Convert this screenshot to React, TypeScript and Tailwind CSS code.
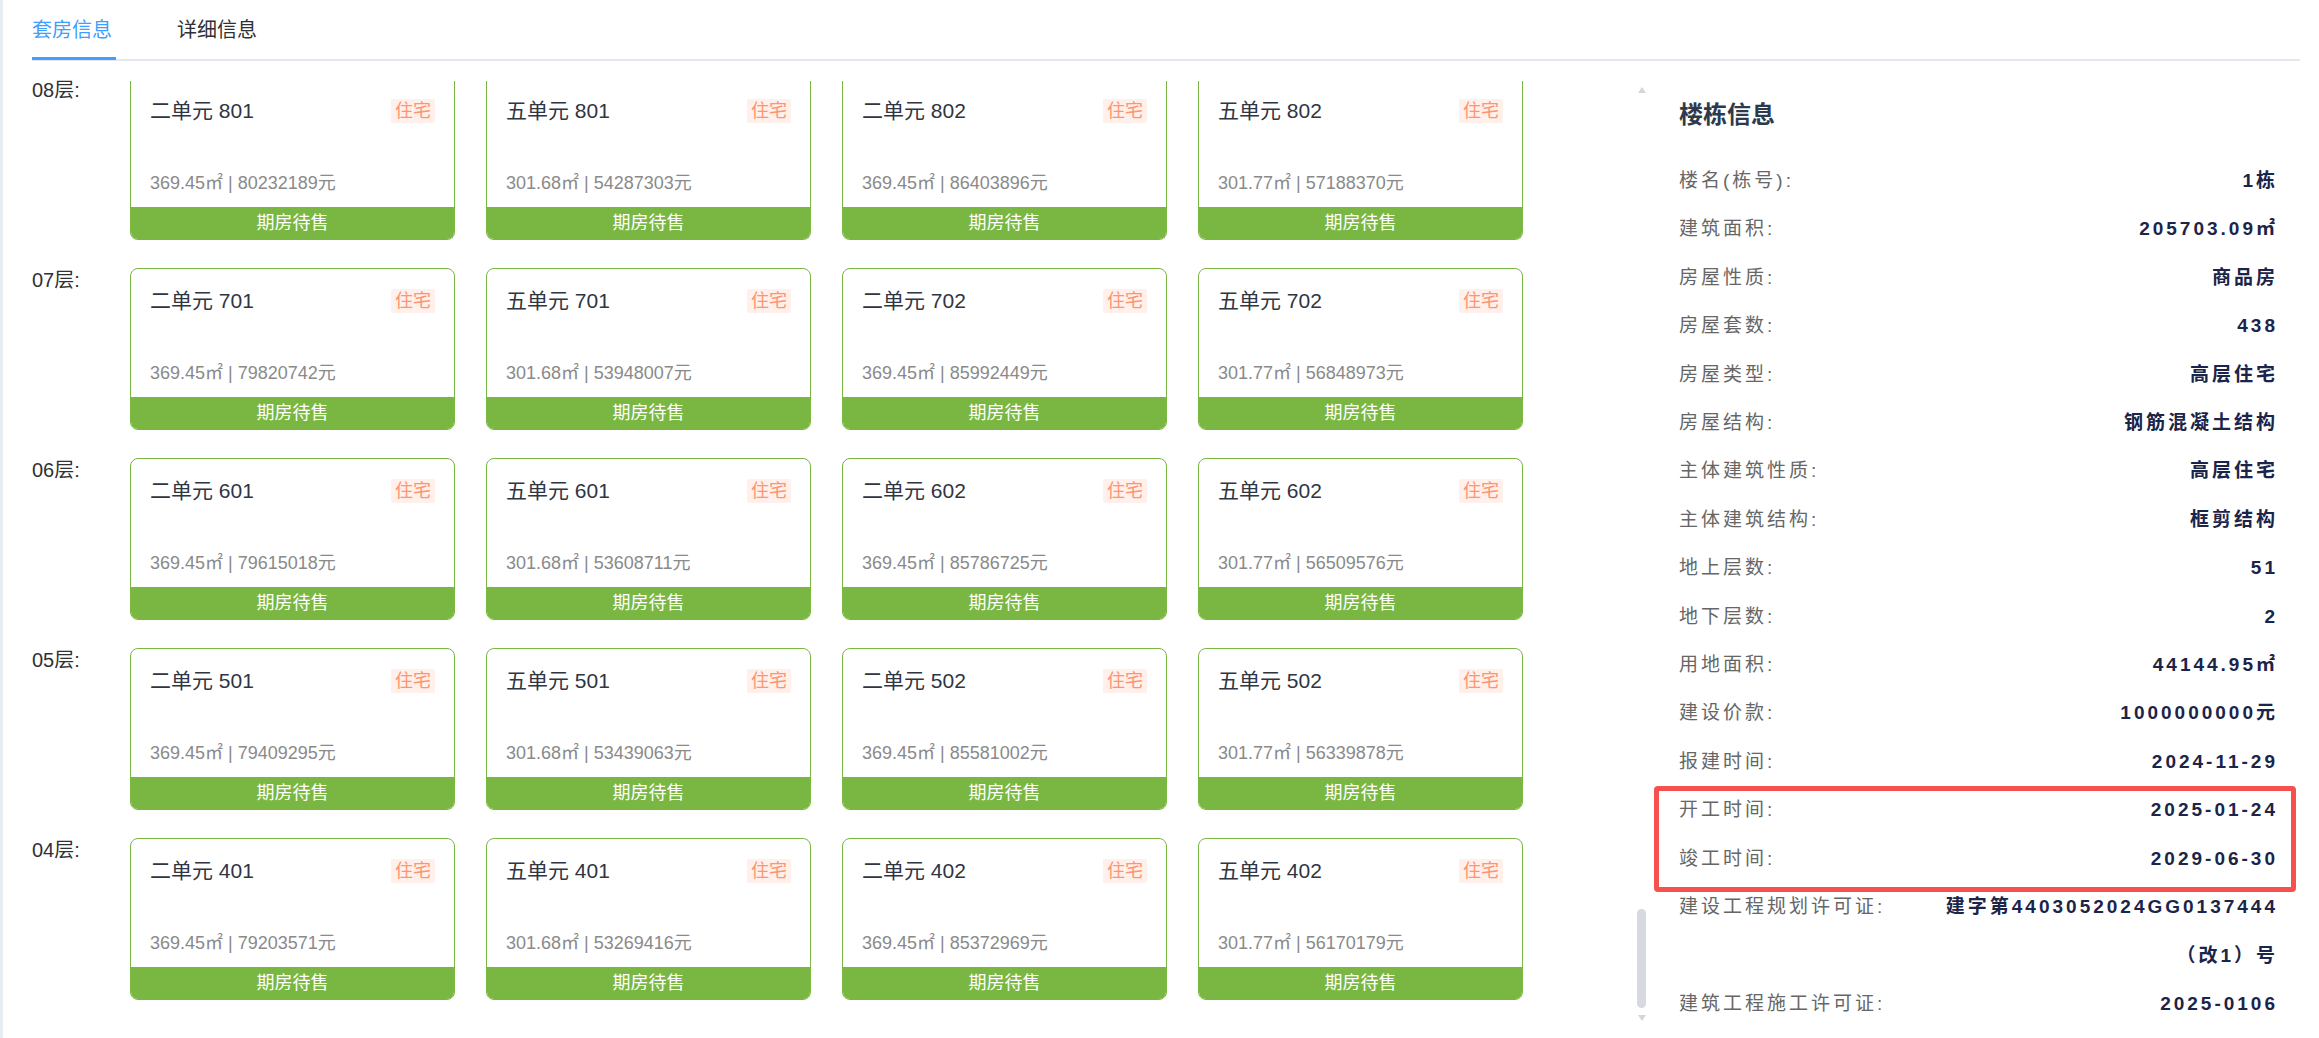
import React from "react";

type Unit = { name: string; area: string; price: string };
type Floor = { label: string; units: Unit[] };

const floors: Floor[] = [
  {
    label: "08层:",
    units: [
      { name: "二单元 801", area: "369.45", price: "80232189" },
      { name: "五单元 801", area: "301.68", price: "54287303" },
      { name: "二单元 802", area: "369.45", price: "86403896" },
      { name: "五单元 802", area: "301.77", price: "57188370" },
    ],
  },
  {
    label: "07层:",
    units: [
      { name: "二单元 701", area: "369.45", price: "79820742" },
      { name: "五单元 701", area: "301.68", price: "53948007" },
      { name: "二单元 702", area: "369.45", price: "85992449" },
      { name: "五单元 702", area: "301.77", price: "56848973" },
    ],
  },
  {
    label: "06层:",
    units: [
      { name: "二单元 601", area: "369.45", price: "79615018" },
      { name: "五单元 601", area: "301.68", price: "53608711" },
      { name: "二单元 602", area: "369.45", price: "85786725" },
      { name: "五单元 602", area: "301.77", price: "56509576" },
    ],
  },
  {
    label: "05层:",
    units: [
      { name: "二单元 501", area: "369.45", price: "79409295" },
      { name: "五单元 501", area: "301.68", price: "53439063" },
      { name: "二单元 502", area: "369.45", price: "85581002" },
      { name: "五单元 502", area: "301.77", price: "56339878" },
    ],
  },
  {
    label: "04层:",
    units: [
      { name: "二单元 401", area: "369.45", price: "79203571" },
      { name: "五单元 401", area: "301.68", price: "53269416" },
      { name: "二单元 402", area: "369.45", price: "85372969" },
      { name: "五单元 402", area: "301.77", price: "56170179" },
    ],
  },
];

type Info = { label: string; value: React.ReactNode };

const infoTop: Info[] = [
  { label: "楼名(栋号):", value: "1栋" },
  { label: "建筑面积:", value: "205703.09㎡" },
  { label: "房屋性质:", value: "商品房" },
  { label: "房屋套数:", value: "438" },
  { label: "房屋类型:", value: "高层住宅" },
  { label: "房屋结构:", value: "钢筋混凝土结构" },
  { label: "主体建筑性质:", value: "高层住宅" },
  { label: "主体建筑结构:", value: "框剪结构" },
  { label: "地上层数:", value: "51" },
  { label: "地下层数:", value: "2" },
  { label: "用地面积:", value: "44144.95㎡" },
  { label: "建设价款:", value: "1000000000元" },
  { label: "报建时间:", value: "2024-11-29" },
];

const infoBox: Info[] = [
  { label: "开工时间:", value: "2025-01-24" },
  { label: "竣工时间:", value: "2029-06-30" },
];

const infoBottom: Info[] = [
  {
    label: "建设工程规划许可证:",
    value: (
      <>
        建字第4403052024GG0137444
        <br />
        （改1）号
      </>
    ),
  },
  { label: "建筑工程施工许可证:", value: "2025-0106" },
];

function InfoRow({ item }: { item: Info }) {
  return (
    <div className="flex items-start leading-[48.4px] text-[19px] tracking-[3px]">
      <div className="shrink-0 text-[#666666]">{item.label}</div>
      <div className="flex-1 text-right font-bold text-[#1b2449]">{item.value}</div>
    </div>
  );
}

function UnitCard({ unit, clipped }: { unit: Unit; clipped: boolean }) {
  return (
    <div
      className={
        clipped
          ? "w-[325px] h-[159px] border border-t-0 border-[#7ab742] rounded-b-[8px] overflow-hidden flex flex-col bg-white"
          : "w-[325px] h-[162px] border border-[#7ab742] rounded-[8px] overflow-hidden flex flex-col bg-white"
      }
    >
      <div className={clipped ? "h-[126px] px-[19px] pt-[18px]" : "h-[128px] px-[19px] pt-[20px]"}>
        <div className="flex items-center justify-between h-[24px]">
          <span className="text-[21px] leading-[24px] text-[#2f3542]">{unit.name}</span>
          <span className="h-[24px] leading-[24px] px-[4px] rounded-[2px] bg-[#fff0eb] text-[#ff9472] text-[18px]">
            住宅
          </span>
        </div>
        <div className="mt-[48px] text-[18px] leading-[24px] text-[#8a8a8a]">
          {unit.area}㎡ | {unit.price}元
        </div>
      </div>
      <div className="h-[32px] bg-[#7ab742] text-white text-[18px] leading-[32px] text-center">
        期房待售
      </div>
    </div>
  );
}

export default function App() {
  return (
    <div className="w-[2319px] h-[1038px] bg-white border-l-[3px] border-[#e8edf4] overflow-hidden flex flex-col font-['Liberation_Sans','Noto_Sans_CJK_SC',sans-serif]">
      {/* Tabs */}
      <div className="ml-[29px] mr-[19px] h-[61px] border-b-2 border-[#e4e7ed] flex items-stretch shrink-0">
        <div className="relative w-[84px] flex items-center text-[20px] text-[#409eff]">
          套房信息
          <div className="absolute left-0 right-0 -bottom-[1px] h-[3px] bg-[#409eff]" />
        </div>
        <div className="ml-[61px] flex items-center text-[20px] text-[#303133]">详细信息</div>
      </div>

      {/* Body */}
      <div className="flex flex-1 min-h-0">
        {/* Left: units list with scrollbar */}
        <div className="relative w-[1647px] shrink-0 pt-[20px] flex flex-col">
          <div className="flex-1 flex flex-col gap-[28px]">
            {floors.map((f, idx) => (
              <div key={f.label} className="flex items-start">
                <div
                  className={
                    idx === 0
                      ? "ml-[29px] -mt-[3px] w-[98px] shrink-0 text-[20px] leading-[24px] text-[#303133]"
                      : "ml-[29px] w-[98px] shrink-0 text-[20px] leading-[24px] text-[#303133]"
                  }
                >
                  {f.label}
                </div>
                <div className="grid grid-cols-[repeat(4,325px)] gap-x-[31px]">
                  {f.units.map((u) => (
                    <UnitCard key={u.name} unit={u} clipped={idx === 0} />
                  ))}
                </div>
              </div>
            ))}
          </div>
          {/* scrollbar overlay */}
          <div className="absolute right-[4px] top-[26px] w-[9px] flex flex-col items-center">
            <div className="w-0 h-0 border-x-[4px] border-x-transparent border-b-[6px] border-b-[#d3d6dd]" />
          </div>
          <div className="absolute right-[4px] top-[848px] w-[9px] h-[99px] rounded-full bg-[#d6d9e0]" />
          <div className="absolute right-[4px] top-[954px] w-[9px] flex flex-col items-center">
            <div className="w-0 h-0 border-x-[4px] border-x-transparent border-t-[6px] border-t-[#d3d6dd]" />
          </div>
        </div>

        {/* Right: building info */}
        <div className="flex-1 pl-[29px] pr-[41px] pt-[30px]">
          <div className="h-[48px] leading-[48px] text-[24px] font-bold text-[#2d3a4e]">楼栋信息</div>
          <div className="mt-[18px]">
            {infoTop.map((i) => (
              <InfoRow key={i.label} item={i} />
            ))}
            <div className="relative">
              {infoBox.map((i) => (
                <InfoRow key={i.label} item={i} />
              ))}
              <div className="absolute -left-[25px] -right-[18px] top-0 -bottom-[9px] border-[5px] border-[#f5514f] rounded-[4px] pointer-events-none" />
            </div>
            {infoBottom.map((i) => (
              <InfoRow key={i.label} item={i} />
            ))}
          </div>
        </div>
      </div>
    </div>
  );
}
